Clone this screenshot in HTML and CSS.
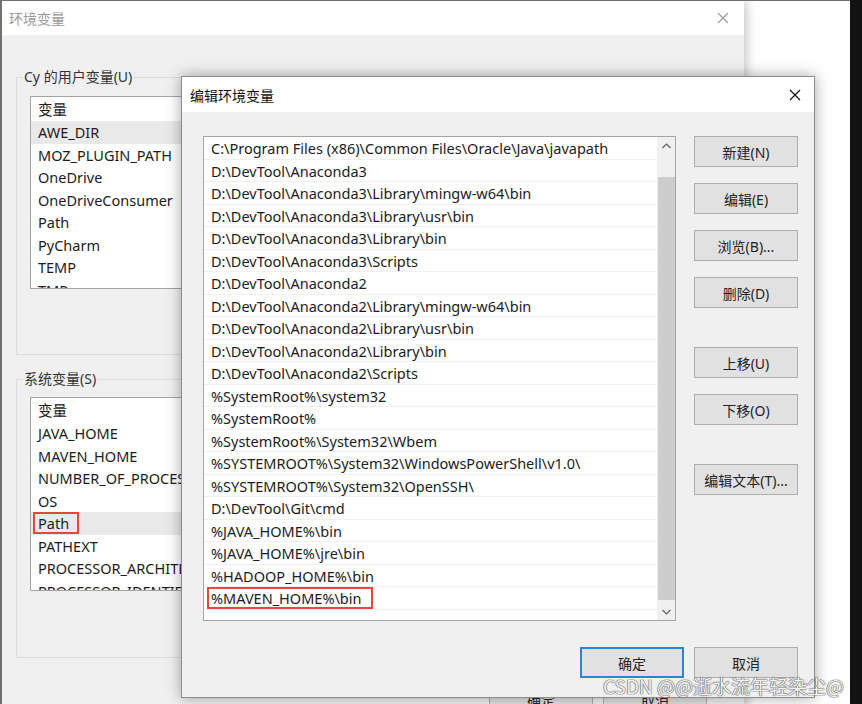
FILE: index.html
```html
<!DOCTYPE html>
<html>
<head>
    <meta charset="utf-8">
    <meta name="viewport" content="width=device-width, initial-scale=1.0">
    <link rel="stylesheet" href="styles.css">
</head>
<body>
<div class="screen">

    <!-- outer window: 环境变量 -->
    <div class="env-window">
        <div class="titlebar">
            <span class="title">环境变量</span>
            <svg class="close" width="12" height="12" viewBox="0 0 12 12"><path d="M1 1L11 11M11 1L1 11" stroke="#9a9a9a" stroke-width="1.2" fill="none"/></svg>
        </div>
        <div class="env-body">
            <fieldset class="group">
                <legend>Cy 的用户变量(U)</legend>
                <div class="var-list user-list">
                    <div class="var-head">变量</div>
                    <div class="var-row selected">AWE_DIR</div>
                    <div class="var-row">MOZ_PLUGIN_PATH</div>
                    <div class="var-row">OneDrive</div>
                    <div class="var-row">OneDriveConsumer</div>
                    <div class="var-row">Path</div>
                    <div class="var-row">PyCharm</div>
                    <div class="var-row">TEMP</div>
                    <div class="var-row">TMP</div>
                </div>
            </fieldset>

            <fieldset class="group sys-group">
                <legend>系统变量(S)</legend>
                <div class="var-list sys-list">
                    <div class="var-head">变量</div>
                    <div class="var-row">JAVA_HOME</div>
                    <div class="var-row">MAVEN_HOME</div>
                    <div class="var-row">NUMBER_OF_PROCESSORS</div>
                    <div class="var-row">OS</div>
                    <div class="var-row selected"><span class="mark mark-path">Path</span></div>
                    <div class="var-row">PATHEXT</div>
                    <div class="var-row">PROCESSOR_ARCHITECTURE</div>
                    <div class="var-row">PROCESSOR_IDENTIFIER</div>
                </div>
            </fieldset>

            <div class="env-footer">
                <button class="btn">确定</button>
                <button class="btn">取消</button>
            </div>
        </div>
    </div>

    <!-- dialog: 编辑环境变量 -->
    <div class="edit-dialog">
        <div class="titlebar dialog-titlebar">
            <span class="title">编辑环境变量</span>
            <svg class="close" width="12" height="12" viewBox="0 0 12 12"><path d="M1 1L11 11M11 1L1 11" stroke="#111" stroke-width="1.2" fill="none"/></svg>
        </div>
        <div class="dialog-body">
            <div class="dialog-main">
                <div class="path-list">
                    <div class="path-rows">
                        <div class="path-row">C:\Program Files (x86)\Common Files\Oracle\Java\javapath</div>
                        <div class="path-row">D:\DevTool\Anaconda3</div>
                        <div class="path-row">D:\DevTool\Anaconda3\Library\mingw-w64\bin</div>
                        <div class="path-row">D:\DevTool\Anaconda3\Library\usr\bin</div>
                        <div class="path-row">D:\DevTool\Anaconda3\Library\bin</div>
                        <div class="path-row">D:\DevTool\Anaconda3\Scripts</div>
                        <div class="path-row">D:\DevTool\Anaconda2</div>
                        <div class="path-row">D:\DevTool\Anaconda2\Library\mingw-w64\bin</div>
                        <div class="path-row">D:\DevTool\Anaconda2\Library\usr\bin</div>
                        <div class="path-row">D:\DevTool\Anaconda2\Library\bin</div>
                        <div class="path-row">D:\DevTool\Anaconda2\Scripts</div>
                        <div class="path-row">%SystemRoot%\system32</div>
                        <div class="path-row">%SystemRoot%</div>
                        <div class="path-row">%SystemRoot%\System32\Wbem</div>
                        <div class="path-row">%SYSTEMROOT%\System32\WindowsPowerShell\v1.0\</div>
                        <div class="path-row">%SYSTEMROOT%\System32\OpenSSH\</div>
                        <div class="path-row">D:\DevTool\Git\cmd</div>
                        <div class="path-row">%JAVA_HOME%\bin</div>
                        <div class="path-row">%JAVA_HOME%\jre\bin</div>
                        <div class="path-row">%HADOOP_HOME%\bin</div>
                        <div class="path-row"><span class="mark mark-maven">%MAVEN_HOME%\bin</span></div>
                    </div>
                    <div class="scrollbar">
                        <div class="arrow">
                            <svg width="9" height="6" viewBox="0 0 9 6"><path d="M0.5 5L4.5 1L8.5 5" stroke="#606060" stroke-width="1.2" fill="none"/></svg>
                        </div>
                        <div class="track"><div class="thumb"></div></div>
                        <div class="arrow">
                            <svg width="9" height="6" viewBox="0 0 9 6"><path d="M0.5 1L4.5 5L8.5 1" stroke="#606060" stroke-width="1.2" fill="none"/></svg>
                        </div>
                    </div>
                </div>

                <div class="side-buttons">
                    <button class="btn">新建(N)</button>
                    <button class="btn">编辑(E)</button>
                    <button class="btn">浏览(B)...</button>
                    <button class="btn">删除(D)</button>
                    <button class="btn btn-split">上移(U)</button>
                    <button class="btn">下移(O)</button>
                    <button class="btn btn-split">编辑文本(T)...</button>
                </div>
            </div>

            <div class="dialog-footer">
                <button class="btn btn-default">确定</button>
                <button class="btn">取消</button>
            </div>
        </div>
    </div>

    <div class="watermark">CSDN @@逝水流年轻染尘@</div>
</div>
<div class="bezel"></div>
</body>
</html>
```

FILE: styles.css
```css
* {
    box-sizing: border-box;
}

html, body {
    margin: 0;
    padding: 0;
}

body {
    width: 862px;
    height: 704px;
    overflow: hidden;
    display: flex;
    font-family: "Noto Sans", "Noto Sans CJK SC", sans-serif;
    font-size: 14px;
    color: #1c1c1c;
}

.screen {
    flex: 1;
    position: relative;
    background: #fff;
    border-top: 1px solid #707070;
    overflow: hidden;
}

.bezel {
    width: 12px;
    background: #121212;
}

/* windows */

.env-window {
    position: absolute;
    left: 0;
    top: 0;
    width: 744px;
    height: 730px;
    background: #f0f0f0;
    border-left: 2px solid #6f6f6f;
    box-shadow: 3px 0 10px rgba(0, 0, 0, 0.22);
}

.titlebar {
    height: 34px;
    background: #fff;
    display: flex;
    align-items: center;
    justify-content: space-between;
    padding: 0 15px 0 7px;
}

.env-window .title {
    color: #9a9a9a;
}

.env-body {
    padding: 32px 14px 0 14px;
}

.group {
    margin: 0;
    border: 1px solid #dcdcdc;
    padding: 9px 28px 65px 13px;
}

.group legend {
    margin-left: -7px;
    padding: 0 1px 4px 1px;
    line-height: 20px;
    height: 20px;
    color: #333;
}

.sys-group {
    margin-top: 14px;
    padding-top: 8px;
    padding-bottom: 66px;
}

.var-list {
    height: 193px;
    background: #fff;
    border: 1px solid #a5a5a5;
    overflow: hidden;
    font-size: 14.5px;
}

.sys-list {
    height: 194px;
}

.var-head {
    height: 24px;
    line-height: 24px;
    padding-left: 7px;
}

.var-row {
    height: 22.5px;
    line-height: 22.5px;
    padding-left: 7px;
    white-space: nowrap;
}

.var-row.selected {
    background: #e9e9e9;
}

.env-footer {
    display: flex;
    justify-content: flex-end;
    gap: 10px;
    margin-top: 26px;
    padding-right: 23px;
}

.edit-dialog {
    position: absolute;
    left: 181px;
    top: 75px;
    width: 634px;
    height: 622px;
    background: #f0f0f0;
    border: 1px solid #8c8c8c;
    box-shadow: 0 0 14px rgba(0, 0, 0, 0.35);
}

.dialog-titlebar {
    height: 35px;
    padding: 0 13px 0 8px;
}

.dialog-titlebar .title {
    color: #111;
}

.dialog-body {
    padding: 24px 16px 0 21px;
}

.dialog-main {
    display: flex;
    gap: 18px;
}

.path-list {
    width: 473px;
    height: 485px;
    background: #fff;
    border: 1px solid #a5a5a5;
    display: flex;
    font-size: 14.5px;
}

.path-rows {
    flex: 1;
    overflow: hidden;
}

.path-row {
    height: 22.5px;
    line-height: 22px;
    padding-left: 7px;
    border-bottom: 1px solid #f0f0f0;
    white-space: nowrap;
}

.scrollbar {
    width: 18px;
    background: #f0f0f0;
    display: flex;
    flex-direction: column;
}

.arrow {
    height: 17px;
    display: flex;
    align-items: center;
    justify-content: center;
}

.track {
    flex: 1;
    display: flex;
    padding: 23px 0 3px 1px;
}

.thumb {
    flex: 1;
    background: #cdcdcd;
}

.mark {
    display: inline-block;
    border: 2px solid #e8453f;
    line-height: 18px;
}

.mark-path {
    margin-left: -5px;
    padding: 0 8px 0 3px;
}

.mark-maven {
    margin-left: -4px;
    padding: 0 10px 0 2px;
}

/* buttons */

.btn {
    width: 104px;
    height: 31px;
    background: #e1e1e1;
    border: 1px solid #adadad;
    font-family: "Noto Sans", "Noto Sans CJK SC", sans-serif;
    font-size: 14px;
    color: #222;
    padding: 0;
}

.btn-default {
    border: 2px solid #2b86d8;
}

.side-buttons {
    display: flex;
    flex-direction: column;
    gap: 16px;
}

.btn-split {
    margin-top: 23px;
}

.dialog-footer {
    display: flex;
    justify-content: flex-end;
    gap: 10px;
    margin-top: 26px;
}

.watermark {
    position: absolute;
    left: 603px;
    top: 671px;
    font-family: "Noto Sans CJK SC", sans-serif;
    font-size: 19px;
    color: #f4f4f4;
    text-shadow: 0 0 1px #555, 0 0 1px #555, 0 0 1px #555;
    white-space: nowrap;
}
```
